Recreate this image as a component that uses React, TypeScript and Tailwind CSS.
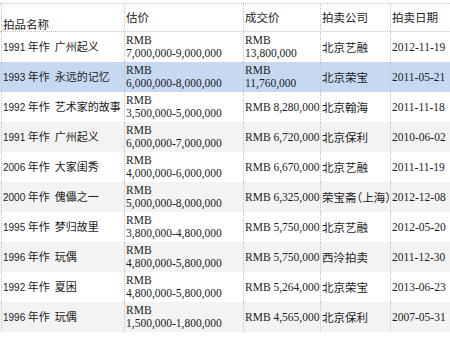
import React from "react"

type Row = {
  year: string
  title: string
  estimate: string[]
  price: string[]
  house: string
  date: string
}

const rows: Row[] = [
  { year: "1991", title: "广州起义", estimate: ["RMB", "7,000,000-9,000,000"], price: ["RMB", "13,800,000"], house: "北京艺融", date: "2012-11-19" },
  { year: "1993", title: "永远的记忆", estimate: ["RMB", "6,000,000-8,000,000"], price: ["RMB", "11,760,000"], house: "北京荣宝", date: "2011-05-21" },
  { year: "1992", title: "艺术家的故事", estimate: ["RMB", "3,500,000-5,000,000"], price: ["RMB 8,280,000"], house: "北京翰海", date: "2011-11-18" },
  { year: "1991", title: "广州起义", estimate: ["RMB", "6,000,000-7,000,000"], price: ["RMB 6,720,000"], house: "北京保利", date: "2010-06-02" },
  { year: "2006", title: "大家闺秀", estimate: ["RMB", "4,000,000-6,000,000"], price: ["RMB 6,670,000"], house: "北京艺融", date: "2011-11-19" },
  { year: "2000", title: "傀儡之一", estimate: ["RMB", "5,000,000-8,000,000"], price: ["RMB 6,325,000"], house: "荣宝斋（上海）", date: "2012-12-08" },
  { year: "1995", title: "梦归故里", estimate: ["RMB", "3,800,000-4,800,000"], price: ["RMB 5,750,000"], house: "北京艺融", date: "2012-05-20" },
  { year: "1996", title: "玩偶", estimate: ["RMB", "4,800,000-5,800,000"], price: ["RMB 5,750,000"], house: "西泠拍卖", date: "2011-12-30" },
  { year: "1992", title: "夏困", estimate: ["RMB", "4,800,000-5,800,000"], price: ["RMB 5,264,000"], house: "北京荣宝", date: "2013-06-23" },
  { year: "1996", title: "玩偶", estimate: ["RMB", "1,500,000-1,800,000"], price: ["RMB 4,565,000"], house: "北京保利", date: "2007-05-31" },
]

const cols = "grid grid-cols-[124px_119px_77px_70px_60px]"
const cell = "flex flex-col justify-center pl-px border-l border-dotted border-[#c4c4c4] whitespace-nowrap overflow-visible"

export default function App() {
  return (
    <div className="w-[450px] h-[338px] bg-white pt-[3px] text-[#1c1c1c] text-[11.5px] leading-[13px] font-['Liberation_Serif','Noto_Sans_CJK_SC',serif]">
      {/* header */}
      <div className={`${cols} h-[29px] border-t border-b border-dotted border-[#c4c4c4] font-['Noto_Sans_CJK_SC',sans-serif]`}>
        <div className={`${cell} justify-end pb-0 ml-px`}>拍品名称</div>
        <div className={cell}>估价</div>
        <div className={cell}>成交价</div>
        <div className={cell}>拍卖公司</div>
        <div className={cell}>拍卖日期</div>
      </div>

      {rows.map((r, i) => (
        <div
          key={i}
          className={`${cols} h-[30px] ${i === 1 ? "bg-[#c6d9f1]" : i % 2 === 1 ? "bg-[#f3f3f3]" : "bg-white"}`}
        >
          <div className={`${cell} ml-px font-['Noto_Sans_CJK_SC',sans-serif] text-[11px]`}>
            <span className="whitespace-pre">
              <span className="font-['Liberation_Sans',sans-serif] text-[10px]">{r.year}</span> 年作  {r.title}
            </span>
          </div>
          <div className={cell}>
            {r.estimate.map((l) => (
              <span key={l}>{l}</span>
            ))}
          </div>
          <div className={cell}>
            {r.price.map((l) => (
              <span key={l}>{l}</span>
            ))}
          </div>
          <div className={`${cell} font-['Noto_Sans_CJK_SC',sans-serif] [font-feature-settings:'halt'] relative z-10`}>
            {r.house}
          </div>
          <div className={cell}>{r.date}</div>
        </div>
      ))}
    </div>
  )
}
